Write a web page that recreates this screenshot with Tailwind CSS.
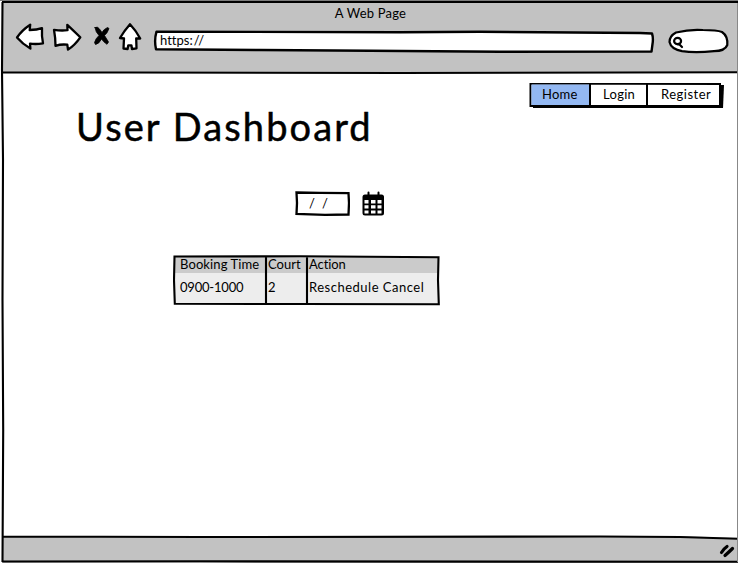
<!DOCTYPE html>
<html lang="en">
<head>
<meta charset="utf-8">
<title>A Web Page</title>
<script src="https://cdn.jsdelivr.net/npm/@tailwindcss/browser@4"></script>
</head>
<body class="bg-white">
<div class="relative flex h-[563px] w-[738px] flex-col overflow-hidden bg-white font-['Lato',sans-serif] text-[13px] leading-4 font-normal text-black [font-variant-ligatures:none]">
  <header class="ml-[3px] h-[73px] shrink-0 bg-[#c2c2c2] pt-[5px]">
    <div class="-ml-[3px] pl-[3px] text-center tracking-[0.2px]">A Web Page</div>
    <div class="mt-px flex h-[34px] items-start">
      <svg class="ml-[11px] h-[34px] w-[130px] shrink-0" viewBox="14 22 130 34" fill="white" stroke="black" stroke-width="2.3" stroke-linejoin="round" stroke-linecap="round">
        <path d="M17 37.5Q22 30 30.2 24.7L29.7 30Q37 30 42 28.2Q41.5 36 43 43.3Q36 44.5 30 43.6L30.4 48.5Q22.5 44 17 37.5Z"/>
        <path d="M54 29.8Q61 31 67.5 30.2L67.3 24.8Q74 31 80.3 37.3Q75 45 68 49.6L67.3 44.7Q61 44 55.5 45.8Q55.5 38 54 29.8Z"/>
        <path d="M95 27.500Q97.500 26 99.500 29L102 32.500Q104 29 107.500 27.500L109 28.500Q107.500 33 104.500 35.500L108.500 42L107 44.300Q103.500 42 101.500 39Q99 44 95.500 44.500L94.500 42.500Q96 38 99 35.500Q95.500 32 95 27.500Z" fill="black" stroke-width="0.8"/>
        <path d="M130 24.2Q124 31 120 38L124 38.5L123.5 48.5L127.6 49L128.3 45.3H131.4L132 49L136.5 48.3L136.2 38.5H140.2Q136 30.5 130 24.2Z"/>
      </svg>
      <div class="relative ml-[9px] h-[24px] w-[503px] shrink-0 translate-y-[8px]">
        <svg class="absolute inset-0 h-full w-full" viewBox="153 30 503 24" fill="white" stroke="black" stroke-width="2.4" stroke-linejoin="round">
          <path d="M156.500 31.600L400 32.200L480 31.700L640 33L652 33.500Q653.500 38 652.500 44L651.500 51.600L500 51.700L370 50.700L260 50L156 49.300Q154 40 156.500 31.600Z"/>
        </svg>
        <div class="relative pt-[2px] pl-[7px]">https:<span class="ml-[1px] tracking-[1.500px]">//</span></div>
      </div>
      <svg class="ml-[11px] h-[30px] w-[64px] shrink-0 translate-y-[4px]" viewBox="667 26 64 30" fill="white" stroke="black" stroke-width="2.2" stroke-linecap="round">
        <path d="M676 32.500Q690 29 703 30Q717 30 722 32Q728 36 727.300 45Q725 51 714 51.200Q695 53 682 51.200Q671 49 669.500 42Q669.500 36 676 32.500Z"/>
        <ellipse cx="677.600" cy="41" rx="3.500" ry="3.200"/>
        <path d="M678 44.300L679.500 44.500L682 47"/>
      </svg>
    </div>
  </header>

  <main class="flex-1">
    <nav class="ml-[529px] flex h-[35px] pt-[10px]">
      <div class="relative flex h-[25px] w-[195px]">
        <svg class="absolute inset-0 h-full w-full" viewBox="529 83 195 25">
          <path d="M533 86L724 85L723 108.500L533 108Z"/>
          <path d="M530.500 83.500L720 84L720 106L530.500 106Z" fill="white" stroke="black" stroke-width="2"/>
          <path d="M531.500 84.500H589.500V105H531.500Z" fill="#93b8f2"/>
          <path d="M590 84V106M647 84V106" stroke="black" stroke-width="2"/>
        </svg>
        <a class="relative w-[62px] pt-[3px] pl-[13px] tracking-[0.2px]">Home</a>
        <a class="relative w-[57px] pt-[3px] pl-[12px] tracking-[0.3px]">Login</a>
        <a class="relative pt-[3px] pl-[13px] tracking-[0.500px]">Register</a>
      </div>
    </nav>
    <h1 class="-mt-[6px] ml-[76px] h-[48px] text-[38px] leading-[48px] tracking-[2.100px] whitespace-nowrap [-webkit-text-stroke:0.5px_black]">User Dashboard</h1>
    <div class="mt-[41px] ml-[295px] flex h-[26px] gap-[11px]">
      <div class="relative h-[26px] w-[55px]">
        <svg class="absolute inset-0 h-full w-full" viewBox="295 191 55 26" fill="white" stroke="black" stroke-width="2.3">
          <path d="M296.500 192.500L320 192.800L348.500 193.200L349 203L348.500 214.500L325 214.800L296.500 214L297 203Z"/>
        </svg>
        <div class="relative flex gap-[7px] pt-[4px] pl-[14px]"><span>/</span><span>/</span></div>
      </div>
      <svg class="h-[26px] w-[24px]" viewBox="361 191 24 26">
        <rect x="362.500" y="194.500" width="21.500" height="21" rx="2.500"/>
        <path d="M368.500 192.500V196M378.500 192.500V196" stroke="black" stroke-width="2" stroke-linecap="round"/>
        <path d="M364.500 200h4v3.500h-4zM371 200h4.500v3.500H371zM377.500 200h4v3.500h-4zM364.500 205.300h4v3.200h-4zM371 205.300h4.500v3.200H371zM377.500 205.300h4v3.200h-4zM364.500 210.500h4v3h-4zM371 210.500h4.500v3H371zM377.500 210.500h4v3h-4z" fill="white"/>
      </svg>
    </div>
    <div class="relative mt-[38px] ml-[173px] h-[51px] w-[267px]">
      <svg class="absolute inset-0 h-full w-full" viewBox="173 255 267 51">
        <path d="M175 257H438V304H175Z" fill="#ededed"/>
        <path d="M175 257H438V273H175Z" fill="#cbcbcb"/>
        <path d="M174.500 256.500L300 256.300L438.500 257.300L438 280L438.800 304.300L300 304L174.800 303.800L174 280ZM266 257V304M307 257V304" fill="none" stroke="black" stroke-width="2.1"/>
      </svg>
      <div class="relative grid grid-cols-[93px_41px_133px] grid-rows-[23px_22px] pt-[1px] whitespace-nowrap">
        <div class="pl-[7px] tracking-[0.1px]">Booking Time</div>
        <div class="pl-[2px]">Court</div>
        <div class="pl-[2px] tracking-[-0.100px]">Action</div>
        <div class="pl-[7px] tracking-[-0.200px]">0900-1000</div>
        <div class="pl-[2px]">2</div>
        <div class="pl-[2px] tracking-[0.500px]">Reschedule Cancel</div>
      </div>
    </div>
  </main>

  <footer class="ml-[3px] flex h-[27px] justify-end bg-[#c2c2c2]">
    <svg class="mt-[6px] mr-[1px] h-[17px] w-[20px]" viewBox="717 542 20 17" fill="none" stroke="black" stroke-width="3.2" stroke-linecap="round">
      <path d="M721.500 552.500Q724 548.500 727 546.500M725 555.500Q729 552 732.500 548.500"/>
    </svg>
  </footer>

  <svg class="pointer-events-none absolute inset-0 h-full w-full" viewBox="0 0 738 563" fill="none" stroke="black" stroke-width="2.1">
    <path d="M0 0H738V1H0Z" fill="#7c7c7c" stroke="none"/>
    <path d="M600 534H738V538L680 536Z" fill="white" stroke="none"/>
    <path d="M2 2H738M2.500 2L2 70L3 160L2.500 300L3.200 430L2.500 562M3 72.300L400 73L738 72.300M3 536.500L200 537L600 536.500L680 537L738 538.700M2 561.500L200 561.300L738 561.800"/>
    <path d="M737.500 3V562" stroke="#888" stroke-width="1"/>
  </svg>
</div>
</body>
</html>
